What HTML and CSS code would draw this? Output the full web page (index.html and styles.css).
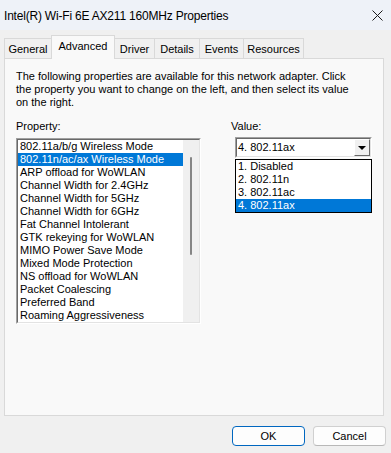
FILE: index.html
```html
<!DOCTYPE html>
<html lang="en">
<head>
  <meta charset="UTF-8" />
  <title>Intel(R) Wi-Fi 6E AX211 160MHz Properties</title>
  <link rel="stylesheet" href="styles.css">
</head>
<body>
  <div class="window">
    <div class="titlebar">
      <span class="title">Intel(R) Wi-Fi 6E AX211 160MHz Properties</span>
      <svg class="close" width="11" height="11" viewBox="0 0 11 11">
        <path d="M0.5 0.5 L10.5 10.5 M10.5 0.5 L0.5 10.5" stroke="#1b1b1b" stroke-width="1" fill="none" />
      </svg>
    </div>

    <div class="tabs">
      <div class="tab tab-general">General</div>
      <div class="tab tab-advanced active">Advanced</div>
      <div class="tab tab-driver">Driver</div>
      <div class="tab tab-details">Details</div>
      <div class="tab tab-events">Events</div>
      <div class="tab tab-resources">Resources</div>
    </div>

    <div class="page">
      <p class="intro">The following properties are available for this network adapter. Click<br>the property you want to change on the left, and then select its value<br>on the right.</p>

      <div class="cols">
        <div class="prop-col">
          <label class="field-label">Property:</label>
          <div class="listbox">
            <div class="listbox-inner">
              <ul class="items">
                <li>802.11a/b/g Wireless Mode</li>
                <li class="selected">802.11n/ac/ax Wireless Mode</li>
                <li>ARP offload for WoWLAN</li>
                <li>Channel Width for 2.4GHz</li>
                <li>Channel Width for 5GHz</li>
                <li>Channel Width for 6GHz</li>
                <li>Fat Channel Intolerant</li>
                <li>GTK rekeying for WoWLAN</li>
                <li>MIMO Power Save Mode</li>
                <li>Mixed Mode Protection</li>
                <li>NS offload for WoWLAN</li>
                <li>Packet Coalescing</li>
                <li>Preferred Band</li>
                <li>Roaming Aggressiveness</li>
              </ul>
              <div class="scrollbar"><div class="thumb"></div></div>
            </div>
          </div>
        </div>

        <div class="value-col">
          <label class="field-label">Value:</label>
          <div class="combo">
            <div class="combo-inner">
              <span class="combo-text">4. 802.11ax</span>
              <span class="combo-btn"><span class="arrow"></span></span>
            </div>
          </div>
          <ul class="dropdown">
            <li>1. Disabled</li>
            <li>2. 802.11n</li>
            <li>3. 802.11ac</li>
            <li class="selected">4. 802.11ax</li>
          </ul>
        </div>
      </div>
    </div>

    <div class="buttons">
      <button class="btn btn-ok">OK</button>
      <button class="btn">Cancel</button>
    </div>
  </div>
</body>
</html>
```

FILE: styles.css
```css
body { margin: 0; background: #f0f0f0; font-family: "Liberation Sans", Arial, sans-serif; font-size: 11px; color: #000; }
.window { width: 391px; height: 453px; display: flex; flex-direction: column; overflow: hidden; }

.titlebar { height: 30px; background: #eef2f8; display: flex; align-items: center; justify-content: space-between; padding: 0 8px 0 4px; box-sizing: border-box; }
.title { font-size: 12px; line-height: 14px; margin-top: 1px; letter-spacing: -0.2px; }
.close { display: block; margin-top: 1px; }

.tabs { display: flex; align-items: flex-end; height: 23px; margin: 5px 0 0 4px; position: relative; z-index: 1; }
.tab { box-sizing: border-box; height: 20px; padding-top: 4px; line-height: 13px; text-align: center; background: #f0f0f0; border: 1px solid #d9d9d9; border-bottom: none; margin-right: -1px; }
.tab.active { height: 24px; margin-bottom: -1px; padding-top: 4px; background: #f9f9f9; position: relative; z-index: 1; }
.tab-general { width: 48px; }
.tab-advanced { width: 64px; }
.tab-driver { width: 41px; }
.tab-details { width: 46px; }
.tab-events { width: 45px; }
.tab-resources { width: 61px; }

.page { box-sizing: border-box; width: 380px; height: 358px; margin: 0 0 0 4px; padding: 11px 11px; border: 1px solid #d9d9d9; background: #f9f9f9; }
.intro { margin: 0; line-height: 13px; white-space: nowrap; }

.cols { display: flex; margin-top: 11px; }
.field-label { display: block; line-height: 13px; }

.prop-col { width: 186px; }
.listbox { margin-top: 5px; border: 1px solid; border-color: #a0a0a0 #fff #fff #a0a0a0; }
.listbox-inner { display: flex; height: 182px; background: #fff; border: 1px solid; border-color: #696969 #e3e3e3 #e3e3e3 #696969; }
.items { list-style: none; margin: 0; padding: 0; flex: 1; }
.items li, .dropdown li { height: 13px; line-height: 13px; padding-left: 2px; white-space: nowrap; }
.items li.selected, .dropdown li.selected { background: #0078d7; color: #fff; }
.scrollbar { width: 16px; background: #f0f0f0; display: flex; justify-content: center; padding-top: 17px; box-sizing: border-box; }
.thumb { width: 2px; height: 98px; background: #858585; border-radius: 1px; }

.value-col { margin-left: 30px; }
.combo { margin: 4px 0 0 4px; width: 137px; border: 1px solid; border-color: #a0a0a0 #fff #fff #a0a0a0; box-sizing: border-box; }
.combo-inner { display: flex; align-items: center; justify-content: space-between; height: 19px; box-sizing: border-box; background: #fff; border: 1px solid; border-color: #696969 #e3e3e3 #e3e3e3 #696969; }
.combo-text { padding-left: 1px; line-height: 13px; }
.combo-btn { width: 16px; height: 17px; box-sizing: border-box; display: flex; align-items: center; justify-content: center; background: #f0f0f0; border: 1px solid; border-color: #fff #696969 #696969 #fff; }
.arrow { width: 0; height: 0; border-left: 4px solid transparent; border-right: 4px solid transparent; border-top: 4px solid #000; }
.dropdown { list-style: none; margin: 1px 0 0 4px; padding: 0; width: 137px; box-sizing: border-box; border: 1px solid #000; background: #fff; }

.buttons { display: flex; justify-content: flex-end; gap: 8px; margin-top: 10px; padding-right: 5px; }
.btn { width: 73px; height: 20px; padding: 0; font-family: inherit; font-size: 11px; background: #fdfdfd; border: 1px solid #d0d0d0; border-bottom-color: #b8b8b8; border-radius: 4px; color: #000; }
.btn-ok { border: 1px solid #0067c0; }
```
